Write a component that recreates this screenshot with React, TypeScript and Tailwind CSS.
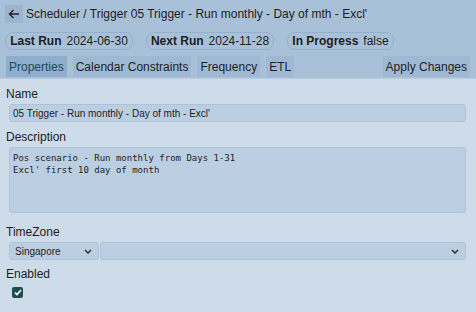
import React from "react";

const Chevron = () => (
  <svg width="8" height="5" viewBox="0 0 8 5" className="shrink-0">
    <path d="M1 1 L4 4 L7 1" fill="none" stroke="#333" strokeWidth="1.5" />
  </svg>
);

export default function App() {
  const tabs = ["Calendar Constraints", "Frequency", "ETL"];
  const pills: [string, string, string][] = [
    ["Last Run", "2024-06-30", "w-[128px]"],
    ["Next Run", "2024-11-28", "w-[128px]"],
    ["In Progress", "false", "w-[107px]"],
  ];
  return (
    <div className="w-[476px] h-[312px] overflow-hidden bg-[#cedbe8] font-['Liberation_Sans',Arial,sans-serif] text-[#1e1e1e]">
      <div className="bg-[#a9c0d9] border-b border-[#bccbdb] h-[79px] pt-[5px]">
        <div className="h-[18px] flex items-center pl-[5px]">
          <div className="w-[18px] h-[18px] bg-[#9bb4d0] flex items-center justify-center">
            <svg width="12" height="10" viewBox="0 0 12 10">
              <path d="M11 5 H1.8 M5.5 1 L1.5 5 L5.5 9" fill="none" stroke="#222" strokeWidth="1.4" />
            </svg>
          </div>
          <span className="ml-[3px] text-[12px] leading-none">Scheduler / Trigger 05 Trigger - Run monthly - Day of mth - Excl'</span>
        </div>
        <div className="flex items-center gap-[13px] pl-[5px] mt-[9px] h-[18px]">
          {pills.map(([k, v, w]) => (
            <div key={k} className={`${w} h-[18px] flex items-center justify-center rounded-[8px] border border-[#95b0cd] text-[12px] leading-none whitespace-nowrap`}>
              <span className="font-bold">{k}</span>
              <span className="ml-[5px]">{v}</span>
            </div>
          ))}
        </div>
        <div className="flex items-center pl-[6px] pr-[6px] mt-[6px] h-[21px] text-[12px] leading-none">
          <div className="h-[21px] px-[3px] flex items-center bg-[#8eadcf] text-[#1d4b4f]">Properties</div>
          {tabs.map((t) => (
            <div key={t} className="ml-[6px] h-[21px] px-[3px] flex items-center bg-[#9fb9d5]">{t}</div>
          ))}
          <div className="ml-auto h-[21px] px-[3px] flex items-center bg-[#9fb9d5]">Apply Changes</div>
        </div>
      </div>

      <div className="pl-[6px] pr-[10px] pt-[8px]">
        <div className="text-[12px] leading-[14px]">Name</div>
        <div className="ml-[3px] mt-[3px] h-[18px] bg-[#bccfe2] border border-[#adc3da] rounded-[3px] flex items-center pl-[3px] text-[10px]">
          05 Trigger - Run monthly - Day of mth - Excl'
        </div>
        <div className="mt-[8px] text-[12px] leading-[14px]">Description</div>
        <div className="ml-[3px] mt-[3px] h-[66px] bg-[#bccfe2] border border-[#adc3da] rounded-[3px] pl-[3px] pt-[4px] font-['DejaVu_Sans_Mono',monospace] text-[9px] leading-[12px] whitespace-pre">
          {"Pos scenario - Run monthly from Days 1-31\nExcl' first 10 day of month"}
        </div>
        <div className="mt-[12px] text-[12px] leading-[14px]">TimeZone</div>
        <div className="ml-[3px] mt-[3px] h-[18px] flex">
          <div className="w-[90px] h-[18px] bg-[#bccfe2] border border-[#adc3da] rounded-[3px] flex items-center justify-between pl-[5px] pr-[6px] text-[10px]">
            <span>Singapore</span>
            <Chevron />
          </div>
          <div className="ml-[1px] flex-1 h-[18px] bg-[#bccfe2] border border-[#adc3da] rounded-[3px] flex items-center justify-end pr-[6px]">
            <Chevron />
          </div>
        </div>
        <div className="mt-[7px] text-[12px] leading-[14px]">Enabled</div>
        <div className="ml-[6px] mt-[6px] w-[11px] h-[11px] rounded-[2px] bg-[#1f4d4f] flex items-center justify-center">
          <svg width="8" height="7" viewBox="0 0 8 7">
            <path d="M1 3.6 L3 5.6 L7 1" fill="none" stroke="#fff" strokeWidth="1.6" />
          </svg>
        </div>
      </div>
    </div>
  );
}
